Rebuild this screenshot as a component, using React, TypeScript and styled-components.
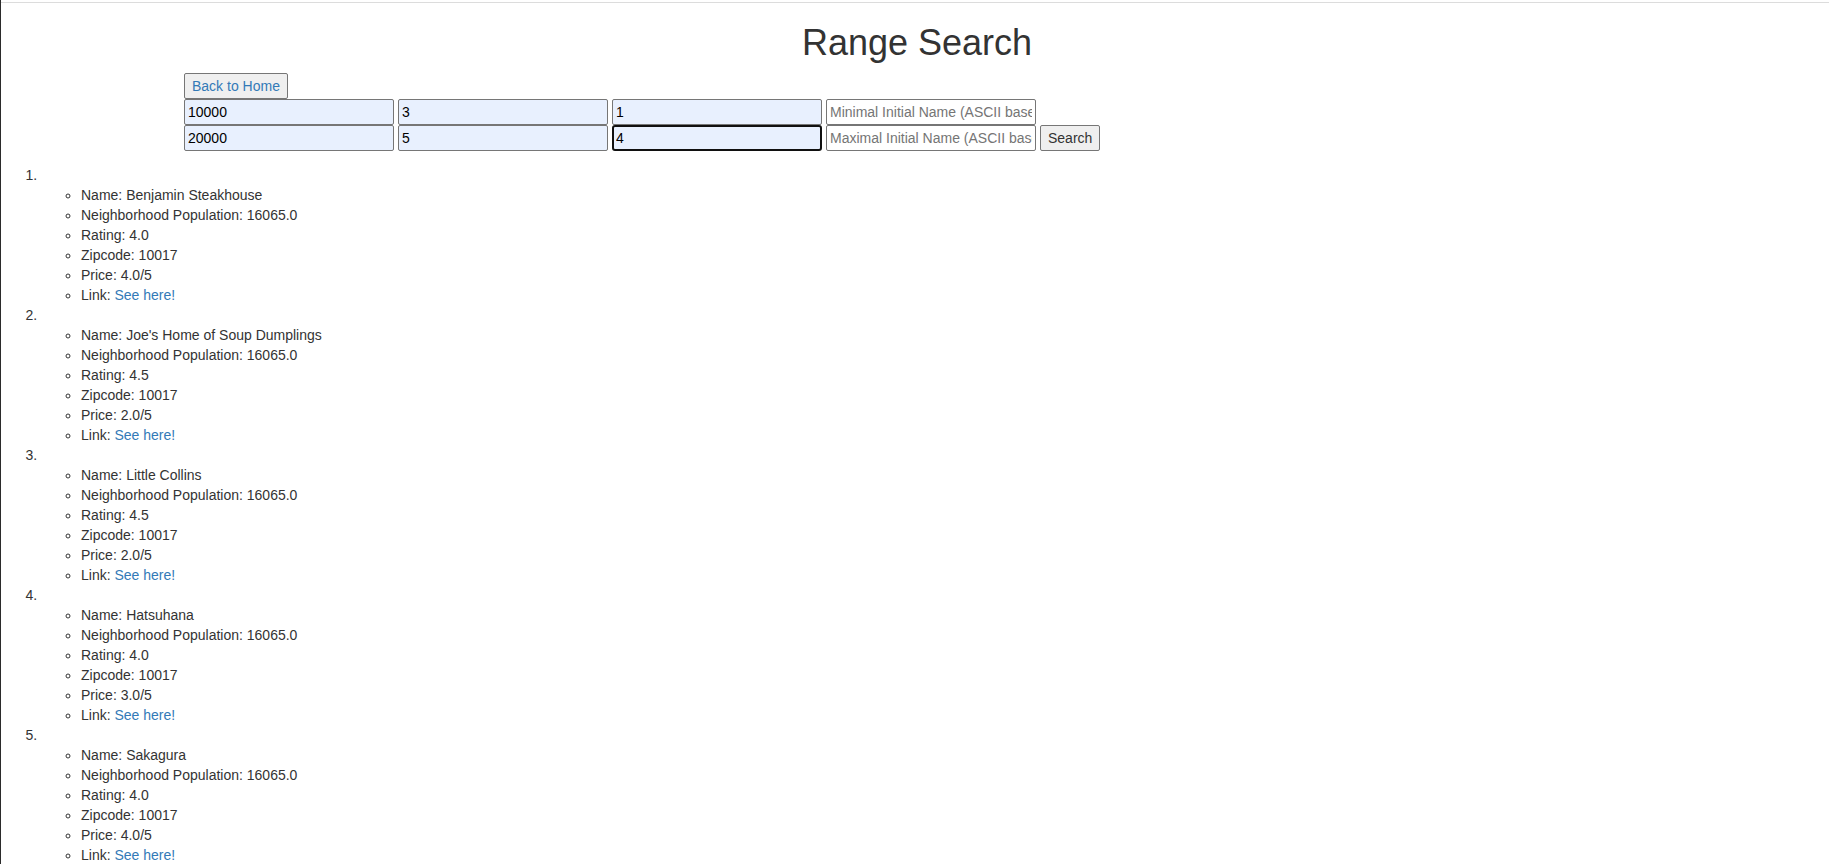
import styled, { createGlobalStyle } from "styled-components";

type Restaurant = {
  name: string;
  population: string;
  rating: string;
  zipcode: string;
  price: string;
};

const results: Restaurant[] = [
  { name: "Benjamin Steakhouse", population: "16065.0", rating: "4.0", zipcode: "10017", price: "4.0/5" },
  { name: "Joe's Home of Soup Dumplings", population: "16065.0", rating: "4.5", zipcode: "10017", price: "2.0/5" },
  { name: "Little Collins", population: "16065.0", rating: "4.5", zipcode: "10017", price: "2.0/5" },
  { name: "Hatsuhana", population: "16065.0", rating: "4.0", zipcode: "10017", price: "3.0/5" },
  { name: "Sakagura", population: "16065.0", rating: "4.0", zipcode: "10017", price: "4.0/5" },
];

function App() {
  return (
    <>
      <GlobalStyle />
      <Page>
        <TopRule />
        <Title>Range Search</Title>
        <Controls>
          <Row>
            <Button $link>Back to Home</Button>
          </Row>
          <Row>
            <Field $filled defaultValue="10000" />
            <Field $filled defaultValue="3" />
            <Field $filled defaultValue="1" />
            <Field placeholder="Minimal Initial Name (ASCII based)" />
          </Row>
          <Row>
            <Field $filled defaultValue="20000" />
            <Field $filled defaultValue="5" />
            <Field $filled $active defaultValue="4" />
            <Field placeholder="Maximal Initial Name (ASCII based)" />
            <Button>Search</Button>
          </Row>
        </Controls>
        <Results>
          {results.map((r) => (
            <li key={r.name}>
              <EmptyLine>&nbsp;</EmptyLine>
              <Details>
                <li>Name: {r.name}</li>
                <li>Neighborhood Population: {r.population}</li>
                <li>Rating: {r.rating}</li>
                <li>Zipcode: {r.zipcode}</li>
                <li>Price: {r.price}</li>
                <li>
                  Link: <A href="#">See here!</A>
                </li>
              </Details>
            </li>
          ))}
        </Results>
      </Page>
    </>
  );
}

export default App;

const GlobalStyle = createGlobalStyle`
  * { box-sizing: border-box; }
  body {
    margin: 0;
    background: #fff;
    color: #333;
    font-family: "Liberation Sans", Arial, sans-serif;
    font-size: 14px;
    line-height: 20px;
  }
`;

const Page = styled.div`
  min-height: 100vh;
  border-left: 1px solid #2b2b2b;
  overflow: hidden;
`;

const TopRule = styled.div`
  margin-top: 2px;
  height: 1px;
  background: #dcdcdc;
`;

const Title = styled.h1`
  margin: 20px 0 10px;
  padding-left: 4px;
  font-size: 36px;
  font-weight: 500;
  line-height: 1.1;
  text-align: center;
  color: #333;
`;

const Controls = styled.div`
  padding-left: 183px;
`;

const Row = styled.div`
  display: flex;
  gap: 4px;
  height: 26px;
`;

const Button = styled.button<{ $link?: boolean }>`
  height: 26px;
  padding: 1px 7px;
  border: 1px solid #767676;
  border-radius: 2px;
  background: #efefef;
  font: inherit;
  line-height: 20px;
  color: ${(p) => (p.$link ? "#337ab7" : "#333")};
`;

const Field = styled.input<{ $filled?: boolean; $active?: boolean }>`
  width: 210px;
  height: 26px;
  margin: 0;
  padding: ${(p) => (p.$active ? "0 2px" : "1px 3px")};
  border: ${(p) => (p.$active ? "2px solid #101010" : "1px solid #767676")};
  border-radius: ${(p) => (p.$active ? "3px" : "2px")};
  background: ${(p) => (p.$filled ? "#e8f0fe" : "#fff")};
  color: #000;
  font: inherit;
  line-height: 20px;
  outline: none;
  &::placeholder {
    color: #757575;
  }
`;

const Results = styled.ol`
  margin: 14px 0 0;
  padding-left: 40px;
`;

const EmptyLine = styled.div`
  height: 20px;
`;

const Details = styled.ul`
  margin: 0;
  padding-left: 40px;
  list-style-type: circle;
`;

const A = styled.a`
  color: #337ab7;
  text-decoration: none;
`;
